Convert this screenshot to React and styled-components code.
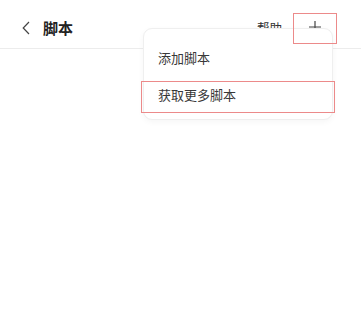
import React from "react";
import styled, { createGlobalStyle } from "styled-components";

const GlobalStyle = createGlobalStyle`
  html, body {
    margin: 0;
    padding: 0;
    background: #ffffff;
  }
  body {
    font-family: "Noto Sans CJK SC", "Noto Sans", sans-serif;
  }
`;

const Page = styled.div`
  position: relative;
  width: 361px;
  height: 314px;
  background: #ffffff;
  overflow: hidden;
`;

const Header = styled.div`
  height: 40px;
  padding-top: 8px;
  border-bottom: 1px solid #ececec;
  display: flex;
  align-items: center;
  box-sizing: content-box;
`;

const BackButton = styled.div`
  width: 24px;
  height: 24px;
  margin-left: 14px;
  display: flex;
  align-items: center;
  justify-content: center;
`;

const Title = styled.span`
  margin-left: 5px;
  font-size: 15px;
  font-weight: 700;
  color: #222222;
  line-height: 20px;
`;

const Spacer = styled.div`
  flex: 1 1 0%;
`;

const HelpLink = styled.span`
  font-size: 12.5px;
  color: #333333;
  line-height: 16px;
  margin-top: 0px;
`;

const AddButton = styled.div`
  width: 44px;
  height: 31px;
  margin-left: 11px;
  margin-right: 24px;
  display: flex;
  align-items: center;
  justify-content: center;
  margin-top: -2px;
`;

const Menu = styled.div`
  position: absolute;
  top: 28px;
  left: 143px;
  width: 190px;
  padding: 10px 0 6px;
  background: #ffffff;
  border: 1px solid #efefef;
  border-radius: 9px;
  box-shadow: 0 2px 6px rgba(0, 0, 0, 0.04);
  box-sizing: border-box;
  display: flex;
  flex-direction: column;
`;

const MenuItem = styled.div`
  height: 37px;
  padding-left: 14px;
  display: flex;
  align-items: center;
  font-size: 13px;
  color: #383838;
`;

const Highlight = styled.div`
  position: absolute;
  border: 1.5px solid #ec8a8a;
  box-sizing: border-box;
  pointer-events: none;
`;

function App() {
  return (
    <>
      <GlobalStyle />
      <Page>
        <Header>
          <BackButton>
            <svg width="8" height="14" viewBox="0 0 8 14">
              <path d="M7 1 L1.2 7 L7 13" fill="none" stroke="#444" strokeWidth="1.2" />
            </svg>
          </BackButton>
          <Title>脚本</Title>
          <Spacer />
          <HelpLink>帮助</HelpLink>
          <AddButton>
            <svg width="14" height="14" viewBox="0 0 14 14">
              <path d="M7 1 V13 M1 7 H13" fill="none" stroke="#444" strokeWidth="1.2" />
            </svg>
          </AddButton>
        </Header>
        <Menu>
          <MenuItem>添加脚本</MenuItem>
          <MenuItem>获取更多脚本</MenuItem>
        </Menu>
        <Highlight style={{ left: 293, top: 13, width: 44, height: 31 }} />
        <Highlight style={{ left: 141, top: 81, width: 194, height: 32 }} />
      </Page>
    </>
  );
}

export default App;
